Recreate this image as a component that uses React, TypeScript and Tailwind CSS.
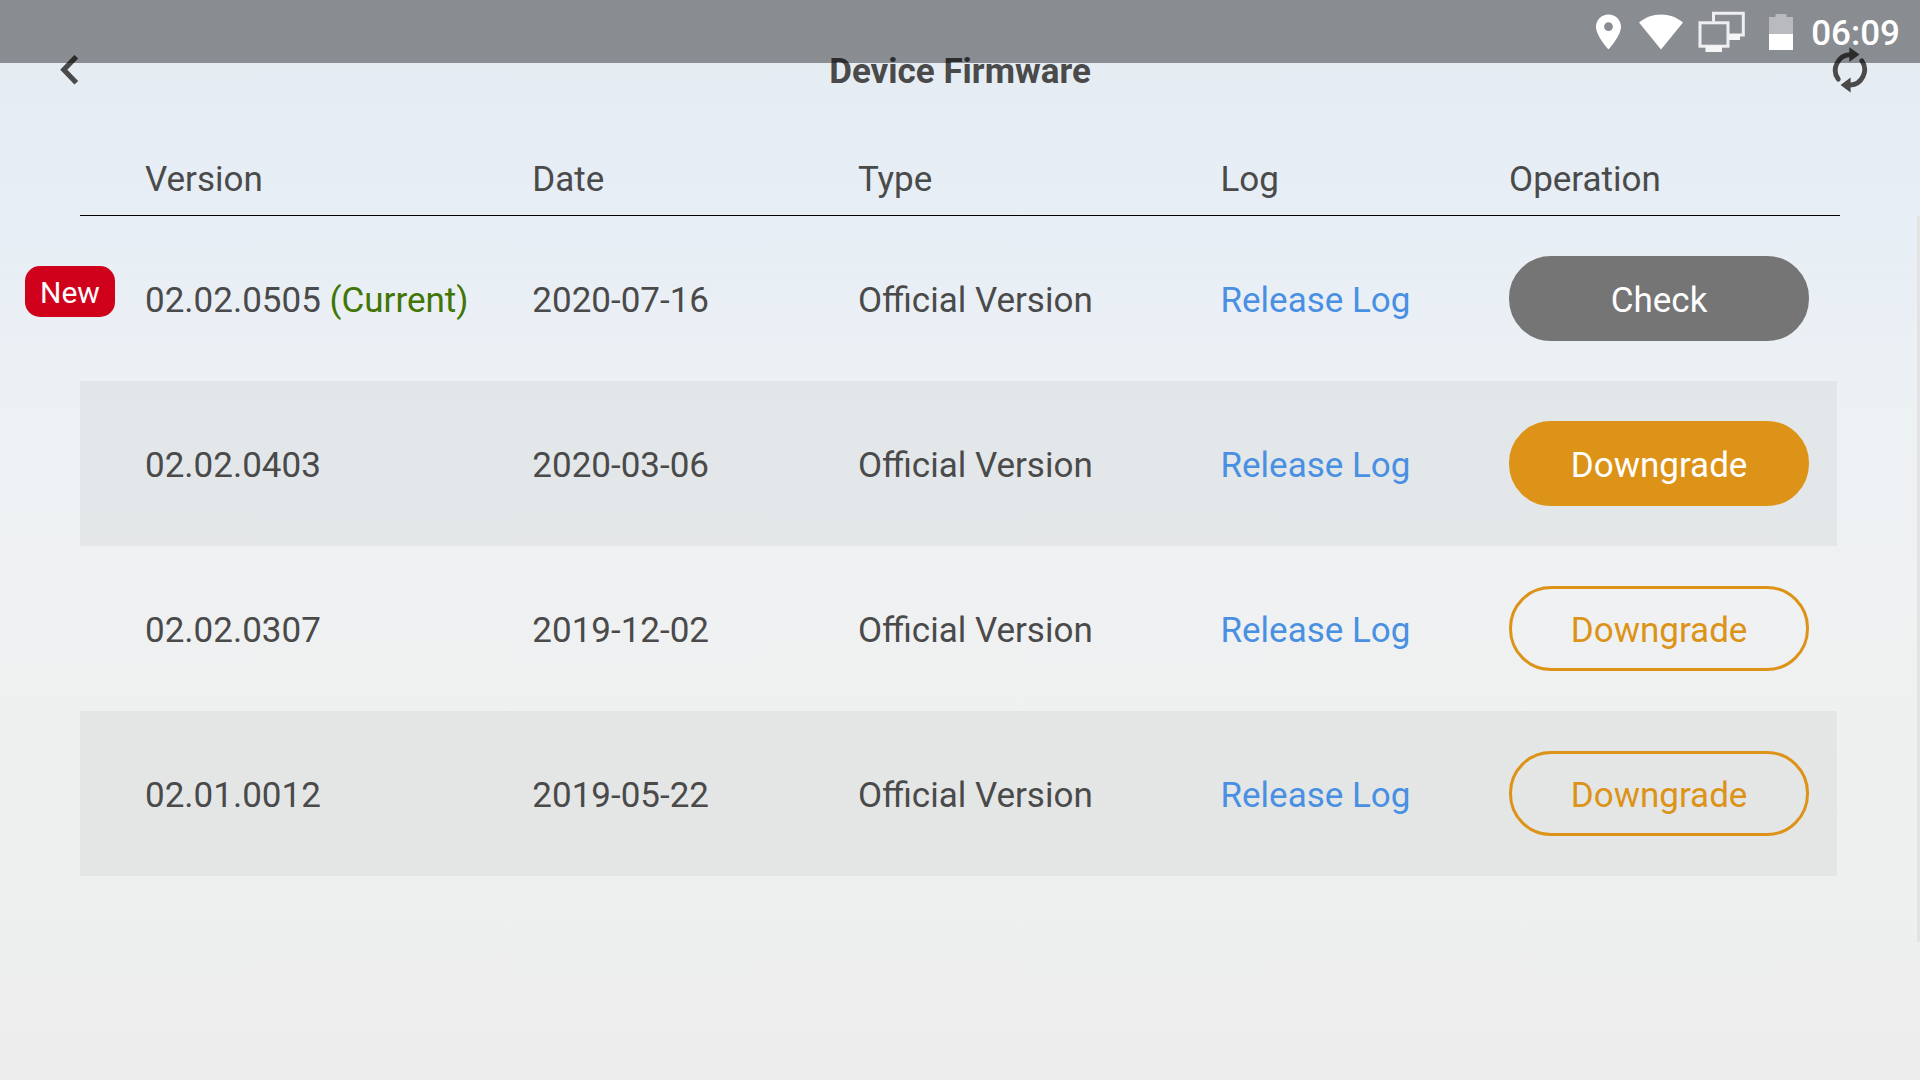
import React from "react";

interface Firmware {
  version: string;
  date: string;
  type: string;
  isNew?: boolean;
  current?: boolean;
  action: "Check" | "Downgrade";
  variant: keyof typeof buttonStyles;
}

const buttonStyles = {
  gray: "bg-[#757575] border-[#757575] text-white",
  solid: "bg-[#dc9318] border-[#dc9318] text-white",
  outline: "border-[#dc9318] text-[#dc9318]",
};

const firmwares: Firmware[] = [
  {
    version: "02.02.0505",
    date: "2020-07-16",
    type: "Official Version",
    isNew: true,
    current: true,
    action: "Check",
    variant: "gray",
  },
  {
    version: "02.02.0403",
    date: "2020-03-06",
    type: "Official Version",
    action: "Downgrade",
    variant: "solid",
  },
  {
    version: "02.02.0307",
    date: "2019-12-02",
    type: "Official Version",
    action: "Downgrade",
    variant: "outline",
  },
  {
    version: "02.01.0012",
    date: "2019-05-22",
    type: "Official Version",
    action: "Downgrade",
    variant: "outline",
  },
];

function StatusBar() {
  return (
    <div className="absolute inset-x-0 top-0 z-10 flex h-[63px] items-center justify-end bg-black/40 pr-5 text-white pointer-events-none">
      <svg className="mr-[18px] h-9 w-[25px]" viewBox="0 0 25 36" fill="currentColor">
        <path
          fillRule="evenodd"
          d="M12.5 0.5C5.6 0.5 0 6 0 12.8C0 22 12.5 35.5 12.5 35.5S25 22 25 12.8C25 6 19.4 0.5 12.5 0.5ZM12.5 8.3a4.4 4.4 0 1 1 0 8.8a4.4 4.4 0 0 1 0-8.8Z"
        />
      </svg>
      <svg className="mr-[15px] h-9 w-11" viewBox="0 0 44 36" fill="currentColor">
        <path d="M22 35.5L0 8.6C6 3.4 13.6 0.5 22 0.5S38 3.4 44 8.6Z" />
      </svg>
      <svg className="mr-6 h-[42px] w-[47px]" viewBox="0 0 47 42" fill="none">
        <path d="M15.5 10.5V2.3H45.3V24H31" stroke="#eeeff0" strokeWidth="3" />
        <path d="M30 23H42V29H30Z" fill="#f6f6f6" />
        <rect x="2" y="11.8" width="28" height="23.4" stroke="#eeeff0" strokeWidth="3" />
        <path d="M7.5 35H24V41H7.5Z" fill="#f6f6f6" />
      </svg>
      <svg className="mr-[18px] h-9 w-6" viewBox="0 0 24 36" fill="currentColor">
        <path d="M6.5 0H17.5V3H24V20H0V3H6.5Z" fillOpacity="0.4" />
        <path d="M0 20H24V36H0Z" />
      </svg>
      <span className="pt-1 text-[35px] leading-10 font-medium">06:09</span>
    </div>
  );
}

function Header() {
  return (
    <header className="grid h-[140px] grid-cols-[1fr_auto_1fr] items-center pr-[52px] pl-[60px]">
      <button aria-label="Back" className="justify-self-start">
        <svg className="h-[30px] w-[19px]" viewBox="0 0 19 30" fill="none">
          <path d="M16.3 1.7L3.8 14.7L16.3 27.7" stroke="currentColor" strokeWidth="5.2" />
        </svg>
      </button>
      <h1 className="pt-1 pr-2 text-[35px] leading-10 font-bold">Device Firmware</h1>
      <button aria-label="Refresh" className="justify-self-end">
        <svg className="h-[46px] w-9" viewBox="0 0 36 46" fill="none">
          <g stroke="currentColor" strokeWidth="4.8" strokeLinecap="round">
            <path d="M6.2 32.2A15.6 15.6 0 0 1 18 7.6" />
            <path d="M29.8 13.7A15.6 15.6 0 0 1 18 38.2" />
          </g>
          <path d="M17.3 0.2L27.5 7.6L17.3 15Z" fill="currentColor" />
          <path d="M18.6 30.6L8.5 38L18.6 45.4Z" fill="currentColor" />
        </svg>
      </button>
    </header>
  );
}

function FirmwareRow({ firmware }: { firmware: Firmware }) {
  return (
    <tr className="h-[165px] [&>td]:bg-clip-padding even:[&>td]:bg-black/4">
      <td className="relative pt-1 pl-[65px]">
        {firmware.isNew && (
          <span className="absolute top-[50px] -left-[55px] flex h-[51px] w-[90px] items-center justify-center rounded-[15px] bg-[#d0021b] pt-0.5 text-3xl text-white">
            New
          </span>
        )}
        {firmware.version}
        {firmware.current && <span className="text-[#417505]"> (Current)</span>}
      </td>
      <td className="pt-1">{firmware.date}</td>
      <td className="pt-1">{firmware.type}</td>
      <td className="pt-1">
        <a href="#" className="text-[#4a90e2]">
          Release Log
        </a>
      </td>
      <td className="border-r-3 border-transparent">
        <button
          className={`block h-[85px] w-[300px] rounded-[42px] border-3 pt-1 ${buttonStyles[firmware.variant]}`}
        >
          {firmware.action}
        </button>
      </td>
    </tr>
  );
}

function App() {
  return (
    <div className="relative flex min-h-screen flex-col bg-[linear-gradient(#e4ecf2,#e7eef5_20%,#ecf1f4_38%,#eff1f2_55%,#eef0ef_82%,#ededed)] font-[Roboto,sans-serif] text-[#4a4a4a]">
      <StatusBar />
      <Header />
      <main className="relative flex-1 px-20">
        <table className="w-full table-fixed border-separate border-spacing-0 text-left text-[35px] leading-10 whitespace-nowrap">
          <colgroup>
            <col className="w-[25.7%]" />
            <col className="w-[18.5%]" />
            <col className="w-[20.6%]" />
            <col className="w-[16.4%]" />
            <col />
          </colgroup>
          <thead>
            <tr className="h-[76px] [&>th]:border-b [&>th]:border-black [&>th]:pt-1 [&>th]:font-normal">
              <th className="pl-[65px]">Version</th>
              <th>Date</th>
              <th>Type</th>
              <th>Log</th>
              <th>Operation</th>
            </tr>
          </thead>
          <tbody>
            {firmwares.map((firmware) => (
              <FirmwareRow key={firmware.version} firmware={firmware} />
            ))}
          </tbody>
        </table>
        {/* scroll indicator */}
        <div className="absolute top-[76px] right-0 h-[77.2%] w-[3px] bg-[#e3e3e3]" />
      </main>
    </div>
  );
}

export default App;
